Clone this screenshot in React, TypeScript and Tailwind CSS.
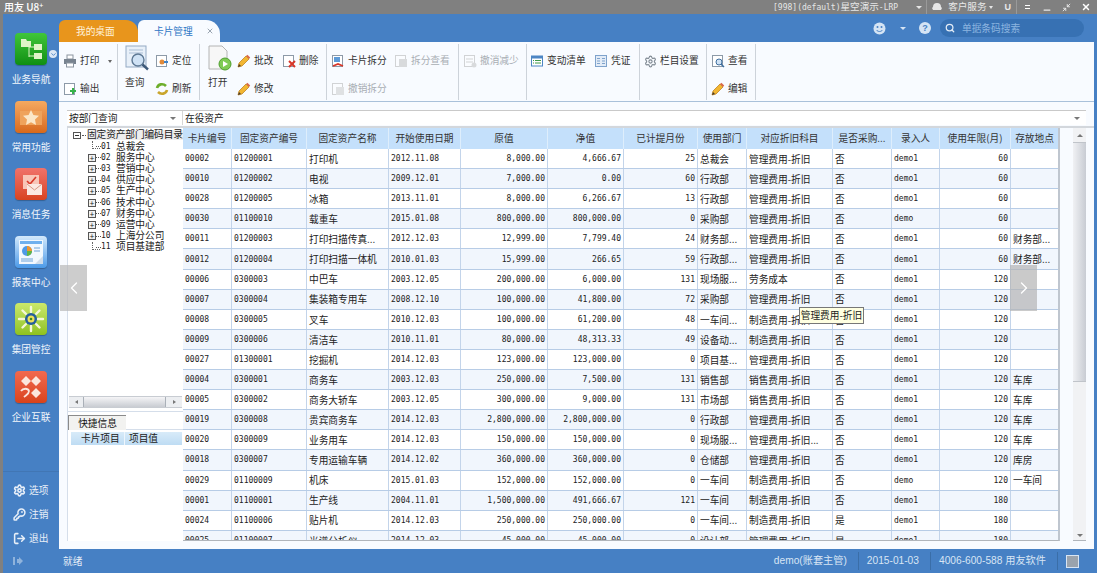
import type { ReactNode } from 'react';
import { ChevronLeft, ChevronRight, ChevronDown, X, Search, Settings, KeyRound, LogOut, Minus, Minimize2 } from 'lucide-react';

const CJK = "font-['Noto_Sans_CJK_SC','Liberation_Sans',sans-serif]";
const MONO = "font-['DejaVu_Sans_Mono','Liberation_Mono',monospace] text-[8px]";

type Row = string[];
const m1 = '管理费用-折旧';
const m2 = '制造费用-折旧';
const m3 = '销售费用-折旧';

const rows: Row[] = [
  ['00002', '01200001', '打印机', '2012.11.08', '8,000.00', '4,666.67', '25', '总裁会', m1, '否', 'demo1', '60', ''],
  ['00010', '01200002', '电视', '2009.12.01', '7,000.00', '0.00', '60', '行政部', m1, '否', 'demo1', '60', ''],
  ['00028', '01200005', '冰箱', '2013.11.01', '8,000.00', '6,266.67', '13', '行政部', m1, '否', 'demo1', '60', ''],
  ['00030', '01100010', '载重车', '2015.01.08', '800,000.00', '800,000.00', '0', '采购部', m1, '否', 'demo', '60', ''],
  ['00011', '01200003', '打印扫描传真...', '2012.12.03', '12,999.00', '7,799.40', '24', '财务部...', m1, '否', 'demo1', '60', '财务部...'],
  ['00012', '01200004', '打印扫描一体机', '2010.01.03', '15,999.00', '266.65', '59', '行政部...', m1, '否', 'demo1', '60', '财务部...'],
  ['00006', '0300003', '中巴车', '2003.12.05', '200,000.00', '6,000.00', '131', '现场服...', '劳务成本', '否', 'demo1', '120', ''],
  ['00007', '0300004', '集装箱专用车', '2008.12.10', '100,000.00', '41,800.00', '72', '采购部', m1, '否', 'demo1', '120', ''],
  ['00008', '0300005', '叉车', '2010.12.03', '100,000.00', '61,200.00', '48', '一车间...', m2, '否', 'demo1', '120', ''],
  ['00009', '0300006', '清洁车', '2010.11.01', '80,000.00', '48,313.33', '49', '设备动...', m2, '否', 'demo1', '120', ''],
  ['00027', '01300001', '挖掘机', '2014.12.03', '123,000.00', '123,000.00', '0', '项目基...', m1, '否', 'demo1', '120', ''],
  ['00004', '0300001', '商务车', '2003.12.03', '250,000.00', '7,500.00', '131', '销售部', m3, '否', 'demo1', '120', '车库'],
  ['00005', '0300002', '商务大轿车', '2003.12.05', '300,000.00', '9,000.00', '131', '市场部', m3, '否', 'demo1', '120', '车库'],
  ['00019', '0300008', '贵宾商务车', '2014.12.03', '2,800,000.00', '2,800,000.00', '0', '行政部', m1, '否', 'demo1', '120', '车库'],
  ['00020', '0300009', '业务用车', '2014.12.03', '150,000.00', '150,000.00', '0', '现场服...', m1 + '...', '否', 'demo1', '120', '车库'],
  ['00018', '0300007', '专用运输车辆', '2014.12.02', '360,000.00', '360,000.00', '0', '仓储部', m1, '否', 'demo1', '120', '库房'],
  ['00029', '01100009', '机床', '2015.01.03', '152,000.00', '152,000.00', '0', '一车间', m2, '否', 'demo', '120', '一车间'],
  ['00001', '01100001', '生产线', '2004.11.01', '1,500,000.00', '491,666.67', '121', '一车间', m2, '否', 'demo1', '180', ''],
  ['00024', '01100006', '贴片机', '2014.12.03', '250,000.00', '250,000.00', '0', '一车间...', m2, '是', 'demo1', '180', ''],
  ['00025', '01100007', '光谱分析仪', '2014.12.03', '45,000.00', '45,000.00', '0', '设计部', m1, '是', 'demo1', '180', ''],
];

const headers = ['卡片编号', '固定资产编号', '固定资产名称', '开始使用日期', '原值', '净值', '已计提月份', '使用部门', '对应折旧科目', '是否采购...', '录入人', '使用年限(月)', '存放地点'];
const GRID = 'grid grid-cols-[49px_75px_82px_72px_87px_76px_74px_49px_86px_59px_48px_71px_48px]';
const monoCols = [0, 1, 3, 4, 5, 6, 10, 11];
const rightCols = [4, 5, 6, 11];

const tree = [
  ['01', '总裁会', false],
  ['02', '服务中心', true],
  ['03', '营销中心', true],
  ['04', '供应中心', true],
  ['05', '生产中心', true],
  ['06', '技术中心', true],
  ['07', '财务中心', true],
  ['09', '运营中心', true],
  ['10', '上海分公司', true],
  ['11', '项目基建部', false],
] as const;

function Pencil() {
  return (
    <svg width="14" height="14" viewBox="0 0 14 14">
      <path d="M1 13l1-4 7-7 3 3-7 7z" fill="#f2b632" stroke="#b87a14" strokeWidth="0.7" />
      <path d="M9 2l1.4-1.2 2.8 2.8L12 5z" fill="#d9694a" />
      <path d="M1 13l1-3 2 2z" fill="#4a3a2a" />
    </svg>
  );
}

function Doc({ children, dim }: { children?: ReactNode; dim?: boolean }) {
  return (
    <svg width="14" height="14" viewBox="0 0 14 14" className={dim ? 'opacity-40 grayscale' : ''}>
      <rect x="1.5" y="1.5" width="10" height="11" fill="#fff" stroke="#8d9aa8" />
      {children}
    </svg>
  );
}

function ToolBtn({ icon, label, dim, w }: { icon: ReactNode; label: string; dim?: boolean; w?: string }) {
  return (
    <div className={`flex items-center gap-[3px] h-[14px] ${w ?? ''}`}>
      <span className="w-[14px] h-[14px] shrink-0 flex items-center justify-center">{icon}</span>
      <span className={`text-[9.7px] leading-none whitespace-nowrap ${dim ? 'text-[#a9aeb4]' : 'text-[#333]'}`}>{label}</span>
    </div>
  );
}

function Group({ width, pl, children }: { width: string; pl: string; children: ReactNode }) {
  return <div className={`${width} ${pl} h-[56px] mt-[2px] border-r border-[#cdd3da] shrink-0 relative`}>{children}</div>;
}

function SideItem({ label, from, children }: { label: string; from: string; children: ReactNode }) {
  return (
    <div className="h-[67.6px] shrink-0 flex flex-col items-center">
      <div className={`w-[32px] h-[32px] rounded-[4px] ${from} flex items-center justify-center shadow-[0_1px_1px_rgba(0,0,0,0.25)]`}>{children}</div>
      <span className="mt-[8px] text-[9.7px] leading-[12px] text-[#f2f6fb] whitespace-nowrap">{label}</span>
    </div>
  );
}

function BottomItem({ icon, label }: { icon: ReactNode; label: string }) {
  return (
    <div className="h-[24px] flex items-center pl-[8px] pt-[2px] gap-[2px]">
      <span className="w-[16px] flex justify-center text-[#e8eff8]">{icon}</span>
      <span className="text-[9.7px] text-[#e8eff8]">{label}</span>
    </div>
  );
}

export default function App() {
  return (
    <div className={`w-[1097px] h-[573px] overflow-hidden flex flex-col bg-[#4680c4] ${CJK}`}>
      {/* title bar */}
      <div className="h-[14px] bg-[#808080] shrink-0 flex items-center text-[#e8e8e8] relative">
        <span className="pl-[4px] text-[10px] font-medium leading-none text-white whitespace-nowrap">
          用友 U8<sup className="text-[7px]">+</sup>
        </span>
        <div className="ml-auto flex items-center h-full">
          <span className="text-[9.6px] leading-none whitespace-nowrap text-[#e6e6e6]">
            <span className={MONO}>[998](default)</span>星空演示<span className={MONO}>-LRP</span>
          </span>
          <span className="ml-[18px] w-0 h-0 border-x-[3px] border-x-transparent border-t-[3px] border-t-[#e6e6e6]" />
          <span className="ml-[4px] h-[14px] border-l border-[#9a9a9a]" />
          <svg width="12" height="10" viewBox="0 0 12 10" className="ml-[4px]">
            <path d="M2 5a4 4 0 0 1 8 0l1 1-1 2H2L1 6z" fill="#e6e6e6" />
          </svg>
          <span className="ml-[5px] text-[9.6px] leading-none whitespace-nowrap">客户服务</span>
          <span className="ml-[2px] w-0 h-0 border-x-[2px] border-x-transparent border-t-[3px] border-t-[#e6e6e6]" />
          <span className="ml-[12px] text-[9px] font-bold leading-none font-['Liberation_Sans',sans-serif]">U</span>
          <span className="ml-[5px] h-[14px] border-l border-[#9a9a9a]" />
          <span className="ml-[8px] flex flex-col gap-[2px]">
            <span className="w-[5px] h-px bg-white" />
            <span className="w-[5px] h-px bg-white" />
          </span>
          <Minus size={10} strokeWidth={3} className="ml-[12px] mt-[5px]" />
          <Minimize2 size={9} strokeWidth={2.5} className="ml-[10px]" />
          <X size={10} strokeWidth={3.5} className="ml-[10px] mr-[6px] text-white" />
        </div>
      </div>

      <div className="flex-1 flex min-h-0">
        <div className="w-[3px] bg-[#808080] shrink-0" />
        <div className="flex-1 flex flex-col min-w-0">
          <div className="flex-1 flex min-h-0">
            {/* sidebar */}
            <aside className="w-[56px] shrink-0 flex flex-col pt-[19px] relative">
              <SideItem label="业务导航" from="bg-gradient-to-b from-[#3fc63a] to-[#0d8f12]">
                <svg width="26" height="26" viewBox="0 0 26 26">
                  <path d="M3 3h5l1 2h4v6H3z" fill="#dff3c8" />
                  <path d="M11 9v12M11 11h6M11 20h6" stroke="#dff3c8" fill="none" />
                  <rect x="16" y="8" width="8" height="6" fill="#dff3c8" />
                  <rect x="16" y="17" width="8" height="6" fill="#dff3c8" />
                </svg>
              </SideItem>
              <SideItem label="常用功能" from="bg-gradient-to-b from-[#f5a960] to-[#d8691a]">
                <svg width="26" height="26" viewBox="0 0 26 26">
                  <path d="M2 7h22v14H2z" fill="#efa35c" />
                  <path d="M13 6l2.4 5 5.6.7-4 3.9 1 5.4-5-2.7-5 2.7 1-5.4-4-3.9 5.6-.7z" fill="#fbe7c8" />
                </svg>
              </SideItem>
              <SideItem label="消息任务" from="bg-gradient-to-b from-[#f0726a] to-[#d8431e]">
                <svg width="26" height="26" viewBox="0 0 26 26">
                  <rect x="5" y="4" width="16" height="14" fill="#f8c6b8" />
                  <path d="M9 10l3 3 6-7" stroke="#d83a2a" strokeWidth="1.6" fill="none" />
                  <rect x="9" y="13" width="15" height="11" fill="#fbe9e2" />
                  <path d="M9 13l7.5 6 7.5-6" stroke="#d89a86" fill="none" />
                </svg>
              </SideItem>
              <SideItem label="报表中心" from="bg-gradient-to-b from-[#d3e9fb] to-[#4a9ae8]">
                <svg width="28" height="28" viewBox="0 0 28 28">
                  <rect x="2" y="2" width="24" height="24" fill="#f2f8fe" />
                  <rect x="3" y="3" width="22" height="3" fill="#6fb0ee" />
                  <circle cx="10" cy="13" r="5" fill="#4f9ae6" />
                  <path d="M10 13V8a5 5 0 0 1 5 5z" fill="#f0962f" />
                  <path d="M10 13h5a5 5 0 0 1-5 5z" fill="#63b544" />
                  <path d="M17 10h6M17 13h6M4 21h12M4 23h12" stroke="#6fa4d8" />
                  <path d="M18 26l8-8v8z" fill="#cfdcea" />
                </svg>
              </SideItem>
              <SideItem label="集团管控" from="bg-gradient-to-b from-[#cbe86a] to-[#8fc21c]">
                <svg width="28" height="28" viewBox="0 0 28 28">
                  <g stroke="#f4f7d8" strokeWidth="2.4" strokeLinecap="round">
                    <path d="M14 2v5M14 21v5M2 14h5M21 14h5M5.5 5.5l3.5 3.5M19 19l3.5 3.5M22.5 5.5L19 9M9 19l-3.5 3.5" />
                  </g>
                  <circle cx="14" cy="14" r="6" fill="#255e9e" />
                  <circle cx="14" cy="14" r="3.5" fill="#eee05a" />
                  <circle cx="14" cy="14" r="1.3" fill="#3b8a22" />
                </svg>
              </SideItem>
              <SideItem label="企业互联" from="bg-gradient-to-b from-[#f1694e] to-[#d9431a]">
                <svg width="26" height="26" viewBox="0 0 26 26" fill="#fbe6dc">
                  <path d="M8 2l5 5-5 5-5-5zM18 2l5 5-5 5-5-5zM18 14l5 5-5 5-5-5z" />
                  <path d="M3 17c2-3 7-3 8 0 0 3-3 4-5 6" fill="none" stroke="#fbe6dc" strokeWidth="1.8" />
                </svg>
              </SideItem>
              <span className="absolute left-[46px] top-[36px] w-[8px] h-[8px] rounded-full bg-[#dbe7f5] flex items-center justify-center">
                <ChevronDown size={7} strokeWidth={3} className="text-[#4680c4]" />
              </span>
              <div className="mt-auto border-t border-[#4176b4] pt-[5px]">
                <BottomItem icon={<Settings size={13} strokeWidth={3} />} label="选项" />
                <BottomItem icon={<KeyRound size={13} strokeWidth={2.8} />} label="注销" />
                <BottomItem icon={<LogOut size={13} strokeWidth={2.8} />} label="退出" />
              </div>
            </aside>

            {/* main */}
            <main className="flex-1 min-w-0 mr-[3px] flex flex-col">
              {/* tabs */}
              <div className="h-[28px] shrink-0 flex items-end relative">
                <div className="w-[79px] h-[22px] bg-[#e8951c] rounded-tl-[6px] rounded-tr-[12px] flex items-center pl-[17px] text-[9.7px] text-[#fff3dd]">我的桌面</div>
                <div className="w-[82px] h-[22px] bg-[#f8fbff] rounded-tl-[6px] rounded-tr-[14px] flex items-center pl-[16px] text-[9.7px] text-[#2f77c5]">
                  卡片管理
                  <X size={8} strokeWidth={3} className="ml-[13px] text-[#9aa5b1]" />
                </div>
                {/* header tools */}
                <div className="ml-auto mr-[10px] mb-[5px] flex items-center">
                  <svg width="13" height="13" viewBox="0 0 13 13">
                    <circle cx="6.5" cy="6.5" r="6" fill="#d5e4f4" />
                    <circle cx="4.5" cy="5" r="1" fill="#4680c4" />
                    <circle cx="8.5" cy="5" r="1" fill="#4680c4" />
                    <path d="M3.5 8c1.5 2 4.5 2 6 0" stroke="#4680c4" fill="none" />
                  </svg>
                  <span className="ml-[14px] w-0 h-0 border-x-[3px] border-x-transparent border-t-[3px] border-t-[#d5e4f4]" />
                  <span className="ml-[13px] w-[12px] h-[12px] rounded-full bg-[#d5e4f4] text-[#4680c4] text-[9px] font-bold leading-[12px] text-center font-['Liberation_Sans',sans-serif]">?</span>
                  <div className="ml-[9px] w-[144px] h-[18px] rounded-full bg-[#3771b3] flex items-center pl-[5px]">
                    <Search size={10} strokeWidth={3} className="text-[#e2ecf7]" />
                    <span className="ml-[7px] text-[9.7px] text-[#8db5e0]">单据条码搜索</span>
                  </div>
                </div>
              </div>

              <div className="flex-1 min-h-0 bg-[#f8fbff] flex flex-col relative">
                {/* toolbar */}
                <div className="h-[60px] shrink-0 border-b border-[#a9c1da] flex">
                  <Group width="w-[59px]" pl="pl-[4px]">
                    <div className="mt-[10px] flex items-center">
                      <ToolBtn icon={
                        <svg width="14" height="14" viewBox="0 0 14 14">
                          <rect x="4" y="1" width="6" height="4" fill="#fff" stroke="#8b95a0" />
                          <rect x="1" y="5" width="12" height="5" fill="#78838f" />
                          <rect x="3.5" y="9" width="7" height="4" fill="#fff" stroke="#8b95a0" />
                        </svg>
                      } label="打印" />
                      <span className="ml-[9px] w-0 h-0 border-x-[2px] border-x-transparent border-t-[3px] border-t-[#666]" />
                    </div>
                    <div className="mt-[14px]">
                      <ToolBtn icon={<Doc><path d="M7 9h6M10 6v6" stroke="#37b24a" strokeWidth="2" /></Doc>} label="输出" />
                    </div>
                  </Group>
                  <Group width="w-[82px]" pl="pl-[7px]">
                    <div className="flex">
                      <div className="w-[30px] flex flex-col items-start">
                        <svg width="25" height="26" viewBox="0 0 25 26" className="mt-[1px]">
                          <rect x="1" y="1" width="20" height="21" fill="#e8f0f9" stroke="#93aac4" />
                          <path d="M4 5h14M4 8h14" stroke="#a9bdd4" />
                          <circle cx="13" cy="15" r="6" fill="#cfe2f5" stroke="#5d7894" strokeWidth="1.4" />
                          <path d="M17.5 19.5l5.5 5" stroke="#3e5a7a" strokeWidth="2.4" />
                        </svg>
                        <span className="mt-[7px] text-[9.7px] leading-none text-[#333]">查询</span>
                      </div>
                      <div>
                        <div className="mt-[10px]">
                          <ToolBtn icon={<Doc><circle cx="7" cy="8" r="2.5" fill="#e08a3a" /><path d="M9 8h4" stroke="#3f83c9" strokeWidth="2" /></Doc>} label="定位" />
                        </div>
                        <div className="mt-[14px]">
                          <ToolBtn icon={
                            <svg width="14" height="14" viewBox="0 0 14 14" fill="none" strokeWidth="2.6">
                              <path d="M2 6c1-4 6-5 9-2" stroke="#6dae2c" />
                              <path d="M12 8c-1 4-6 5-9 2" stroke="#c9a52c" />
                            </svg>
                          } label="刷新" />
                        </div>
                      </div>
                    </div>
                  </Group>
                  <Group width="w-[127px]" pl="pl-[8px]">
                    <div className="flex">
                      <div className="w-[29px] flex flex-col items-start">
                        <svg width="24" height="26" viewBox="0 0 24 26" className="mt-[1px]">
                          <path d="M1 1h13l5 5v18H1z" fill="#f7f7f7" stroke="#b4b4b4" />
                          <circle cx="17" cy="19" r="6" fill="#7fcb55" stroke="#4f9f2e" />
                          <path d="M15 16l5 3-5 3z" fill="#fff" />
                        </svg>
                        <span className="mt-[7px] text-[9.7px] leading-none text-[#333]">打开</span>
                      </div>
                      <div>
                        <div className="mt-[10px] flex">
                          <ToolBtn w="w-[45px]" icon={<Pencil />} label="批改" />
                          <ToolBtn icon={<Doc><path d="M7 7l6 6M13 7l-6 6" stroke="#d8372a" strokeWidth="2" /></Doc>} label="删除" />
                        </div>
                        <div className="mt-[14px]">
                          <ToolBtn icon={<Pencil />} label="修改" />
                        </div>
                      </div>
                    </div>
                  </Group>
                  <Group width="w-[132px]" pl="pl-[4px]">
                    <div className="mt-[10px] flex">
                      <ToolBtn w="w-[63px]" icon={<Doc><rect x="3" y="3" width="6" height="5" fill="#5d9bd8" /><path d="M2 12l5-2 5 2" stroke="#d8372a" strokeWidth="1.8" fill="none" /></Doc>} label="卡片拆分" />
                      <ToolBtn dim icon={<Doc dim><rect x="5" y="5" width="8" height="8" fill="#aaa" /></Doc>} label="拆分查看" />
                    </div>
                    <div className="mt-[14px]">
                      <ToolBtn dim icon={<Doc dim><rect x="5" y="5" width="8" height="8" fill="#bbb" /></Doc>} label="撤销拆分" />
                    </div>
                  </Group>
                  <Group width="w-[68px]" pl="pl-[4px]">
                    <div className="mt-[10px]">
                      <ToolBtn dim icon={<Doc dim><path d="M3 5h7M3 8h7" stroke="#999" /><circle cx="11" cy="11" r="2.5" fill="#aaa" /></Doc>} label="撤消减少" />
                    </div>
                  </Group>
                  <Group width="w-[113px]" pl="pl-[3px]">
                    <div className="mt-[10px] flex">
                      <ToolBtn w="w-[64px]" icon={
                        <svg width="14" height="14" viewBox="0 0 14 14">
                          <rect x="1.5" y="2" width="11" height="10" fill="#fff" stroke="#4d86c4" />
                          <rect x="1.5" y="2" width="11" height="2.5" fill="#4d86c4" />
                          <path d="M3 6.5h1M5 6.5h6M3 9h1M5 9h6" stroke="#3f9a4a" />
                        </svg>
                      } label="变动清单" />
                      <ToolBtn icon={
                        <svg width="14" height="14" viewBox="0 0 14 14">
                          <rect x="1.5" y="1.5" width="11" height="11" fill="#e3ecf7" stroke="#7fa3cc" />
                          <path d="M3 4.5h3M8 4.5h3M3 7h3M8 7h3M3 9.5h3M8 9.5h3" stroke="#7fa3cc" />
                        </svg>
                      } label="凭证" />
                    </div>
                  </Group>
                  <Group width="w-[67px]" pl="pl-[3px]">
                    <div className="mt-[10px]">
                      <ToolBtn icon={<Settings size={13} strokeWidth={2} className="text-[#7d8791]" />} label="栏目设置" />
                    </div>
                  </Group>
                  <Group width="w-[49px]" pl="pl-[4px]">
                    <div className="mt-[10px]">
                      <ToolBtn icon={<Doc><circle cx="8" cy="8" r="3" fill="#cfe2f5" stroke="#3f6f9f" /><path d="M10 10l3 3" stroke="#3f6f9f" strokeWidth="1.5" /></Doc>} label="查看" />
                    </div>
                    <div className="mt-[14px]">
                      <ToolBtn icon={<Pencil />} label="编辑" />
                    </div>
                  </Group>
                </div>

                {/* filter row */}
                <div className="mt-[8px] ml-[8px] mr-[8px] h-[15px] shrink-0 flex border-t border-[#c9c9c9] bg-white text-[9.7px] text-[#222]">
                  <div className="w-[116px] border-r border-[#d6d6d6] flex items-center pl-[2px] pr-[6px] justify-between">
                    按部门查询
                    <span className="w-0 h-0 border-x-[3px] border-x-transparent border-t-[3px] border-t-[#777]" />
                  </div>
                  <div className="flex-1 flex items-center pl-[2px] pr-[6px] justify-between">
                    在役资产
                    <span className="w-0 h-0 border-x-[3px] border-x-transparent border-t-[3px] border-t-[#777]" />
                  </div>
                </div>

                {/* body */}
                <div className="mt-[1px] ml-[8px] h-[415px] flex border-t-[2px] border-[#d3d7dc] shrink-0">
                  {/* left tree panel */}
                  <div className="w-[116px] shrink-0 flex flex-col bg-white border-l border-[#d5deea]">
                    <div className="h-[268px] pl-[5px] pt-[1px] text-[9.7px] text-[#222] overflow-hidden">
                      <div className="h-[12px] flex items-center leading-none whitespace-nowrap">
                        <span className="w-[8px] h-[7px] border border-[#555] flex items-center justify-center shrink-0">
                          <span className="w-[4px] h-px bg-[#333]" />
                        </span>
                        <span className="w-[4px] mx-[1px] border-t border-dotted border-[#555]" />
                        <span className="bg-[#eeeeee] tracking-[-0.1px]">固定资产部门编码目录</span>
                      </div>
                      {tree.map(([code, name, expand]) => (
                        <div key={code} className="h-[11.2px] flex items-center leading-none whitespace-nowrap pl-[15px]">
                          {expand ? (
                            <span className="w-[8px] h-[8px] border border-[#555] bg-[#f0f0f0] flex items-center justify-center shrink-0 text-[8px] leading-none">+</span>
                          ) : (
                            <span className="w-[8px] h-[8px] ml-[4px] mr-[-4px] border-l border-b border-dotted border-[#666] shrink-0 mb-[3px]" />
                          )}
                          <span className="w-[5px] border-t border-dotted border-[#555]" />
                          <span className={`${MONO} w-[15px] text-[#222]`}>{code}</span>
                          <span>{name}</span>
                        </div>
                      ))}
                    </div>
                    {/* h-scrollbar */}
                    <div className="h-[12px] mx-[1px] flex items-center bg-[#eceef1] border-y border-[#c8ccd2]">
                      <span className="w-[14px] flex justify-center"><span className="w-0 h-0 border-y-[2px] border-y-transparent border-r-[3px] border-r-[#777]" /></span>
                      <span className="w-[83px] h-full bg-gradient-to-b from-[#f5f5f7] to-[#c9ccd2] border-x border-[#aab0b8]" />
                      <span className="flex-1 flex justify-center"><span className="w-0 h-0 border-y-[2px] border-y-transparent border-l-[3px] border-l-[#777]" /></span>
                    </div>
                    <div className="mt-[3px] h-[19px] border-t border-[#d5deea] pt-[3px] border-b">
                      <span className="block w-[58px] h-[15px] bg-[#f2f2f0] border-t border-l border-[#8a8a8a] text-[9.7px] leading-[15px] text-center text-[#111]">快捷信息</span>
                    </div>
                    <div className="mt-[2px] ml-[3px] mr-[1px] h-[13px] flex bg-gradient-to-b from-[#d8ebf9] to-[#bedcf3] text-[9.7px] leading-[13px] text-[#222]">
                      <span className="w-[54px] pl-[10px] border-r border-[#eef6fd]">卡片项目</span>
                      <span className="pl-[4px]">项目值</span>
                    </div>
                  </div>

                  {/* table */}
                  <div className="w-[877px] shrink-0 h-[413px] overflow-hidden border-r-2 border-[#bfc6cf] bg-white border-b border-b-[#b0b5bb]">
                    <div className={`${GRID} h-[21px] bg-[#c4e0fb] text-[9.7px] text-[#333]`}>
                      {headers.map((h) => (
                        <div key={h} className="flex items-center justify-center border-r border-[#deeefc] whitespace-nowrap overflow-hidden">{h}</div>
                      ))}
                    </div>
                    {rows.map((r, i) => (
                      <div key={r[0]} className={`${GRID} h-[20.1px] border-b border-[#b7cce6] ${i % 2 ? 'bg-[#f1f6fd]' : 'bg-white'}`}>
                        {r.map((c, j) => (
                          <div
                            key={j}
                            className={`flex items-center whitespace-nowrap overflow-hidden border-r border-[#c3d4ea] text-[#222] px-[2px] pt-[1px] ${rightCols.includes(j) ? 'justify-end' : ''} ${monoCols.includes(j) ? MONO : 'text-[9.7px]'}`}
                          >
                            {c}
                          </div>
                        ))}
                      </div>
                    ))}
                  </div>

                  {/* v-scrollbar */}
                  <div className="ml-[13px] w-[13px] h-[413px] shrink-0 flex flex-col bg-[#f1f2f4] border-b border-[#b0b5bb]">
                    <div className="h-[14px] flex items-center justify-center"><span className="w-0 h-0 border-x-[3px] border-x-transparent border-b-[3px] border-b-[#777]" /></div>
                    <div className="h-[240px] bg-gradient-to-r from-[#f0f1f4] to-[#c8ccd3] border-y border-[#c0c4ca]" />
                    <div className="mt-auto h-[10px] flex items-center justify-center"><span className="w-0 h-0 border-x-[3px] border-x-transparent border-t-[3px] border-t-[#777]" /></div>
                  </div>
                </div>

                {/* overlays */}
                <div className="absolute left-[1px] top-[223px] w-[27px] h-[46px] bg-[#b8b8b8]/70 flex items-center justify-center">
                  <ChevronLeft size={20} strokeWidth={1.6} className="text-white" />
                </div>
                <div className="absolute left-[951px] top-[223px] w-[27px] h-[46px] bg-[#b4b4b4]/70 flex items-center justify-center">
                  <ChevronRight size={20} strokeWidth={1.6} className="text-white" />
                </div>
                <div className="absolute left-[740px] top-[265px] w-[65px] h-[17px] bg-[#ffffe1] border border-[#777] text-[9.7px] text-[#222] flex items-center justify-center whitespace-nowrap">
                  管理费用-折旧
                </div>
              </div>
            </main>
          </div>

          {/* status bar */}
          <footer className="h-[24px] shrink-0 flex items-center text-[10.2px] text-[#d8e5f4] relative">
            <svg width="10" height="10" viewBox="0 0 10 10" className="ml-[10px]">
              <path d="M0 1h2v8H0zM4 3h2V1l4 4-4 4V7H4z" fill="#8fb3dc" />
            </svg>
            <span className="ml-[40px] text-[9.7px] text-[#e8eff8]">就绪</span>
            <div className="ml-auto mr-[18px] flex items-center h-full font-['Liberation_Sans','Noto_Sans_CJK_SC',sans-serif]">
              <span className="whitespace-nowrap">demo(账套主管)</span>
              <span className="ml-[11px] mr-[8px] h-[18px] border-l border-[#3a6ea8]" />
              <span className="whitespace-nowrap">2015-01-03</span>
              <span className="ml-[11px] mr-[8px] h-[18px] border-l border-[#3a6ea8]" />
              <span className="whitespace-nowrap">4006-600-588 用友软件</span>
              <span className="ml-[11px] mr-[8px] h-[18px] border-l border-[#3a6ea8]" />
              <span className="w-[13px] h-[13px] bg-[#9aa3ad] border border-[#d8e5f4]" />
            </div>
          </footer>
        </div>
      </div>
    </div>
  );
}
